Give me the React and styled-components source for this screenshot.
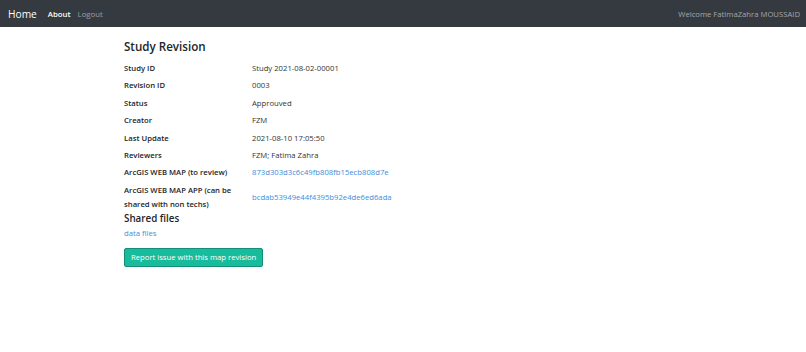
import React from "react";
import styled, { createGlobalStyle } from "styled-components";

const Global = createGlobalStyle`
  html, body { margin: 0; padding: 0; background: #fff; }
  body { font-family: "Open Sans", "Noto Sans", sans-serif; color: #212529; }
`;

const Nav = styled.nav`
  height: 27px;
  background: #343a40;
  display: flex;
  align-items: center;
  padding: 0 6px 0 8px;
`;
const Brand = styled.a`
  color: #fff;
  font-size: 10.2px;
  margin-right: 11px;
  text-decoration: none;
`;
const NavLink = styled.a`
  color: ${(p) => (p.$active ? "#fff" : "rgba(255,255,255,0.5)")};
  font-weight: ${(p) => (p.$active ? 600 : 400)};
  font-size: 7.8px;
  margin-right: 7px;
  text-decoration: none;
`;
const Welcome = styled.span`
  margin-left: auto;
  color: rgba(255,255,255,0.55);
  font-size: 7.7px;
`;

const Main = styled.main`
  padding: 12px 0 0 124px;
  display: flex;
  flex-direction: column;
  align-items: flex-start;
`;
const Title = styled.h1`
  font-size: 11.6px;
  font-weight: 600;
  margin: 0 0 6px;
  line-height: 16px;
`;
const Grid = styled.dl`
  display: grid;
  grid-template-columns: 128px auto;
  row-gap: 3.4px;
  margin: 0;
  font-size: 7.7px;
  line-height: 14px;
  align-items: center;
`;
const Label = styled.dt`
  font-weight: 600;
  width: 118px;
`;
const Value = styled.dd`
  margin: 0;
  color: #333;
`;
const Link = styled.a`
  color: #3c8ddc;
  text-decoration: none;
  font-size: ${(p) => (p.$size ? p.$size : "inherit")};
`;
const Sub = styled.h2`
  font-size: 9.8px;
  font-weight: 600;
  margin: 1px 0 2px;
  line-height: 14px;
`;
const Button = styled.button`
  margin-top: 10px;
  background: #18bc9c;
  border: 1px solid #128f76;
  border-radius: 2px;
  color: #fff;
  font-family: inherit;
  font-size: 7.7px;
  height: 19px;
  padding: 0 6px;
`;

const rows = [
  ["Study ID", "Study 2021-08-02-00001"],
  ["Revision ID", "0003"],
  ["Status", "Approuved"],
  ["Creator", "FZM"],
  ["Last Update", "2021-08-10 17:05:50"],
  ["Reviewers", "FZM; Fatima Zahra"],
  ["ArcGIS WEB MAP (to review)", "873d303d3c6c49fb808fb15ecb808d7e", true],
  ["ArcGIS WEB MAP APP (can be shared with non techs)", "bcdab53949e44f4395b92e4de6ed6ada", true],
];

export default function App() {
  return (
    <>
      <Global />
      <Nav>
        <Brand href="#">Home</Brand>
        <NavLink $active href="#">About</NavLink>
        <NavLink href="#">Logout</NavLink>
        <Welcome>Welcome FatimaZahra MOUSSAID</Welcome>
      </Nav>
      <Main>
        <Title>Study Revision</Title>
        <Grid>
          {rows.map(([l, v, link]) => (
            <React.Fragment key={l}>
              <Label>{l}</Label>
              <Value>{link ? <Link href="#">{v}</Link> : v}</Value>
            </React.Fragment>
          ))}
        </Grid>
        <Sub>Shared files</Sub>
        <Link href="#" $size="7.7px">data files</Link>
        <Button>Report issue with this map revision</Button>
      </Main>
    </>
  );
}
